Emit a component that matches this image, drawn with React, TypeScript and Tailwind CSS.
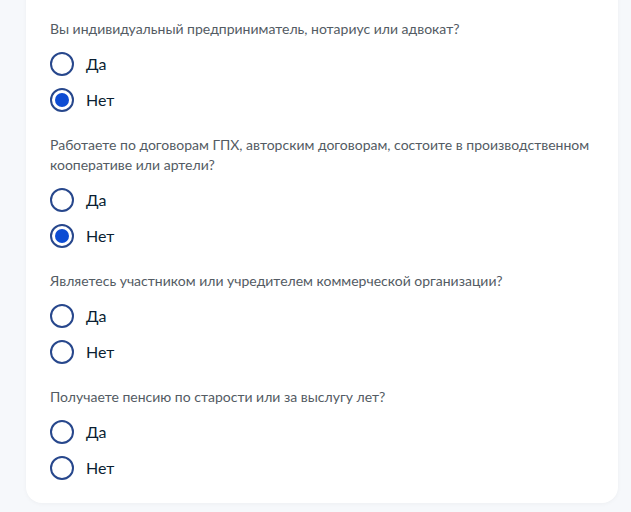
import React from "react";

type Q = { text: React.ReactNode; value: "yes" | "no" | null };

const questions: Q[] = [
  { text: "Вы индивидуальный предприниматель, нотариус или адвокат?", value: "no" },
  {
    text: (
      <>
        Работаете по договорам ГПХ, авторским договорам, состоите в производственном
        <br />
        кооперативе или артели?
      </>
    ),
    value: "no",
  },
  { text: "Являетесь участником или учредителем коммерческой организации?", value: null },
  { text: "Получаете пенсию по старости или за выслугу лет?", value: null },
];

function Radio({ checked, label }: { checked: boolean; label: string }) {
  return (
    <div className="flex h-[36px] items-center">
      <div className="flex h-[24px] w-[24px] items-center justify-center rounded-full border-2 border-[#27478c] bg-white">
        {checked && <div className="h-[14px] w-[14px] rounded-full bg-[#0d4cd3]" />}
      </div>
      <span className="ml-[12px] text-[16px] leading-[20px] text-[#0b1f33]">{label}</span>
    </div>
  );
}

export default function App() {
  return (
    <div
      className="h-[512px] w-[631px] overflow-hidden bg-[#f6f8fb]"
      style={{ fontFamily: "Lato, 'Noto Sans', sans-serif" }}
    >
      <div className="ml-[26px] mr-[13px] -mt-[20px] rounded-b-[16px] bg-white pl-[24px] pr-[24px] pb-[17px] pt-[39px] shadow-[0_1px_4px_rgba(0,0,0,0.04)]">
        {questions.map((q, i) => (
          <div key={i} className={i === 0 ? "" : "mt-[17px]"}>
            <p className="text-[14px] leading-[20px] text-[#535b63]">{q.text}</p>
            <div className="mt-[7px] flex flex-col">
              <Radio checked={q.value === "yes"} label="Да" />
              <Radio checked={q.value === "no"} label="Нет" />
            </div>
          </div>
        ))}
      </div>
    </div>
  );
}
